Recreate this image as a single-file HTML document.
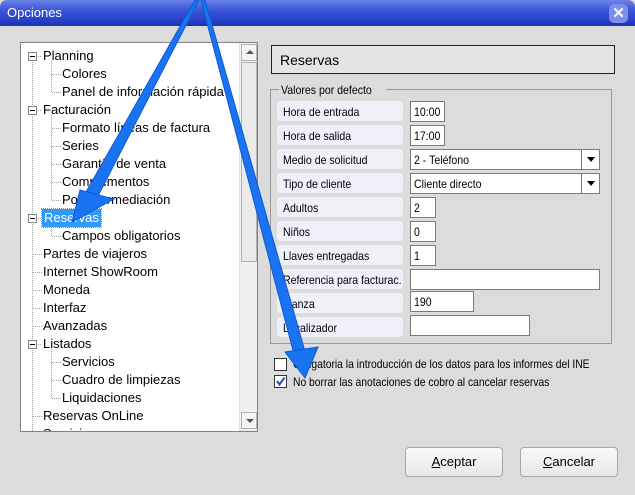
<!DOCTYPE html>
<html><head><meta charset="utf-8"><style>
*{margin:0;padding:0;box-sizing:border-box}
body{width:635px;height:495px;overflow:hidden;background:#dcdcdc;font-family:"Liberation Sans",sans-serif;position:relative}
.a{position:absolute}
.title{left:0;top:0;width:635px;height:26px;background:linear-gradient(#6b83e6,#3a55d8 40%,#2540c8 80%,#1c30a8);border-radius:7px 7px 0 0}
.title span{position:absolute;left:7px;top:5px;color:#fff;font-size:13px}
.close{right:7px;top:4px;width:19px;height:19px;border-radius:5px;background:#7b8fe8;color:#fff;font-weight:bold;font-size:15px;text-align:center;line-height:19px}
.tree{left:20px;top:42px;width:238px;height:390px;background:#fff;border:1px solid #828282;overflow:hidden}
.ti{position:absolute;font-size:13px;color:#000;white-space:nowrap;line-height:16px}
.pm{position:absolute;width:9px;height:9px;border:1px solid #808080;background:#fff}
.pm:after{content:"";position:absolute;left:1px;top:3px;width:5px;height:1px;background:#000}
.sb{position:absolute;left:218px;top:0;width:18px;height:388px;background:#f0f0f0;border-left:1px solid #e0e0e0}
.sbb{position:absolute;left:1px;width:16px;height:17px;background:#f4f4f4;border:1px solid #b0b0b0}
.lbl{position:absolute;left:277px;width:126px;height:20px;background:#f0f0fa;border-radius:4px;font-size:12px;padding:4px 0 0 6px;white-space:nowrap;overflow:hidden}
.lbl span,.inp span{display:inline-block;transform:scaleX(0.88);transform-origin:left}
.inp{position:absolute;left:410px;height:21px;background:#fff;border:1px solid #7a7a7a;font-size:12px;padding:3px 0 0 3px;white-space:nowrap}
.dd{position:absolute;right:0;top:0;width:18px;height:19px;border-left:1px solid #7a7a7a;background:#fff}
.dd:after{content:"";position:absolute;left:5px;top:7px;border:4px solid transparent;border-top:5px solid #000}
.btn{position:absolute;top:447px;height:30px;border:1px solid #a8a8a8;border-radius:4px;background:linear-gradient(#fafafa,#e8e8e8);font-size:13px;text-align:center;line-height:28px}
.cb{position:absolute;left:274px;width:13px;height:13px;border:1px solid #333;background:#fff}
.ct{position:absolute;left:293px;font-size:12px;white-space:nowrap;transform:scaleX(0.86);transform-origin:left}
</style></head><body>
<div class="a title"><span>Opciones</span><div class="a close">✕</div></div>

<div class="a tree">
<svg class="a" style="left:0;top:0" width="218" height="390"><g stroke="#a0a0a0" stroke-dasharray="1,1" fill="none">
<line x1="11.5" y1="13" x2="11.5" y2="390"/>
<line x1="30.5" y1="18" x2="30.5" y2="49"/>
<line x1="30.5" y1="72" x2="30.5" y2="157"/>
<line x1="30.5" y1="180" x2="30.5" y2="193"/>
<line x1="30.5" y1="306" x2="30.5" y2="355"/>
<g>
<line x1="31" y1="31.5" x2="40" y2="31.5"/><line x1="31" y1="49.5" x2="40" y2="49.5"/>
<line x1="31" y1="85.5" x2="40" y2="85.5"/><line x1="31" y1="103.5" x2="40" y2="103.5"/><line x1="31" y1="121.5" x2="40" y2="121.5"/><line x1="31" y1="139.5" x2="40" y2="139.5"/><line x1="31" y1="157.5" x2="40" y2="157.5"/>
<line x1="31" y1="193.5" x2="40" y2="193.5"/>
<line x1="12" y1="211.5" x2="21" y2="211.5"/><line x1="12" y1="229.5" x2="21" y2="229.5"/><line x1="12" y1="247.5" x2="21" y2="247.5"/><line x1="12" y1="265.5" x2="21" y2="265.5"/><line x1="12" y1="283.5" x2="21" y2="283.5"/>
<line x1="31" y1="319.5" x2="40" y2="319.5"/><line x1="31" y1="337.5" x2="40" y2="337.5"/><line x1="31" y1="355.5" x2="40" y2="355.5"/>
<line x1="12" y1="373.5" x2="21" y2="373.5"/>
<line x1="17" y1="13.5" x2="21" y2="13.5"/><line x1="17" y1="67.5" x2="21" y2="67.5"/><line x1="17" y1="175.5" x2="21" y2="175.5"/><line x1="17" y1="301.5" x2="21" y2="301.5"/>
</g></g></svg>
<div class="pm" style="left:7px;top:9px"></div>
<div class="pm" style="left:7px;top:63px"></div>
<div class="pm" style="left:7px;top:171px"></div>
<div class="pm" style="left:7px;top:297px"></div>
<div class="ti" style="left:22px;top:5px">Planning</div>
<div class="ti" style="left:41px;top:23px">Colores</div>
<div class="ti" style="left:41px;top:41px">Panel de información rápida</div>
<div class="ti" style="left:22px;top:59px">Facturación</div>
<div class="ti" style="left:41px;top:77px">Formato líneas de factura</div>
<div class="ti" style="left:41px;top:95px">Series</div>
<div class="ti" style="left:41px;top:113px">Garantía de venta</div>
<div class="ti" style="left:41px;top:131px">Complementos</div>
<div class="ti" style="left:41px;top:149px">Por intermediación</div>
<div class="ti" style="left:21px;top:166px;background:#3399ff;color:#fff;padding:1px 2px;outline:1px dotted #e08000">Reservas</div>
<div class="ti" style="left:41px;top:185px">Campos obligatorios</div>
<div class="ti" style="left:22px;top:203px">Partes de viajeros</div>
<div class="ti" style="left:22px;top:221px">Internet ShowRoom</div>
<div class="ti" style="left:22px;top:239px">Moneda</div>
<div class="ti" style="left:22px;top:257px">Interfaz</div>
<div class="ti" style="left:22px;top:275px">Avanzadas</div>
<div class="ti" style="left:22px;top:293px">Listados</div>
<div class="ti" style="left:41px;top:311px">Servicios</div>
<div class="ti" style="left:41px;top:329px">Cuadro de limpiezas</div>
<div class="ti" style="left:41px;top:347px">Liquidaciones</div>
<div class="ti" style="left:22px;top:365px">Reservas OnLine</div>
<div class="ti" style="left:22px;top:383px">Servicios</div>
<div class="sb">
<div class="sbb" style="top:1px"><div style="position:absolute;left:4px;top:5px;border:4px solid transparent;border-bottom:4px solid #555;border-top:0"></div></div>
<div class="sbb" style="top:19px;height:200px;background:#eaeaea"></div>
<div class="sbb" style="top:369px"><div style="position:absolute;left:4px;top:6px;border:4px solid transparent;border-top:4px solid #555;border-bottom:0"></div></div>
</div>
</div>

<div class="a" style="left:271px;top:45px;width:344px;height:29px;background:#e4e4e4;border:1px solid #222;font-size:14px;padding:6px 0 0 8px">Reservas</div>
<div class="a" style="left:270px;top:89px;width:342px;height:255px;border:1px solid #9a9a9a"></div>
<div class="a" style="left:279px;top:83px;background:#dcdcdc;font-size:12px;padding:0 2px"><span style="display:inline-block;transform:scaleX(0.88);transform-origin:left">Valores por defecto</span></div>

<div class="lbl" style="top:101px"><span>Hora de entrada</span></div><div class="inp" style="top:101px;width:35px"><span>10:00</span></div>
<div class="lbl" style="top:125px"><span>Hora de salida</span></div><div class="inp" style="top:125px;width:35px"><span>17:00</span></div>
<div class="lbl" style="top:149px"><span>Medio de solicitud</span></div><div class="inp" style="top:149px;width:190px"><span>2 - Teléfono</span><div class="dd"></div></div>
<div class="lbl" style="top:173px"><span>Tipo de cliente</span></div><div class="inp" style="top:173px;width:190px"><span>Cliente directo</span><div class="dd"></div></div>
<div class="lbl" style="top:197px"><span>Adultos</span></div><div class="inp" style="top:197px;width:26px"><span>2</span></div>
<div class="lbl" style="top:221px"><span>Niños</span></div><div class="inp" style="top:221px;width:26px"><span>0</span></div>
<div class="lbl" style="top:245px"><span>Llaves entregadas</span></div><div class="inp" style="top:245px;width:26px"><span>1</span></div>
<div class="lbl" style="top:269px"><span>Referencia para facturac.</span></div><div class="inp" style="top:269px;width:190px"></div>
<div class="lbl" style="top:293px"><span>Fianza</span></div><div class="inp" style="top:291px;width:64px"><span>190</span></div>
<div class="lbl" style="top:317px"><span>Localizador</span></div><div class="inp" style="top:315px;width:120px"></div>

<div class="cb" style="top:358px"></div><div class="ct" style="top:357px">Obligatoria la introducción de los datos para los informes del INE</div>
<div class="cb" style="top:375px"><svg width="11" height="11" style="position:absolute;left:0;top:0"><path d="M2 5 L4.5 8.5 L9.5 1.5" stroke="#2050c0" stroke-width="2" fill="none"/></svg></div><div class="ct" style="top:375px">No borrar las anotaciones de cobro al cancelar reservas</div>

<div class="btn" style="left:405px;width:98px"><u>A</u>ceptar</div>
<div class="btn" style="left:520px;width:98px"><u>C</u>ancelar</div>

<svg class="a" style="left:0;top:0" width="635" height="495">
<g fill="#1a73f0" stroke="#0d5ad8" stroke-width="1">
<polygon points="195,0 199,0 98,196 86,192"/>
<polygon points="80,190 114,199 72,222"/>
<polygon points="201,0 205,0 306,355 295,358"/>
<polygon points="285,352 318,347 305,378"/>
</g></svg>
</body></html>
